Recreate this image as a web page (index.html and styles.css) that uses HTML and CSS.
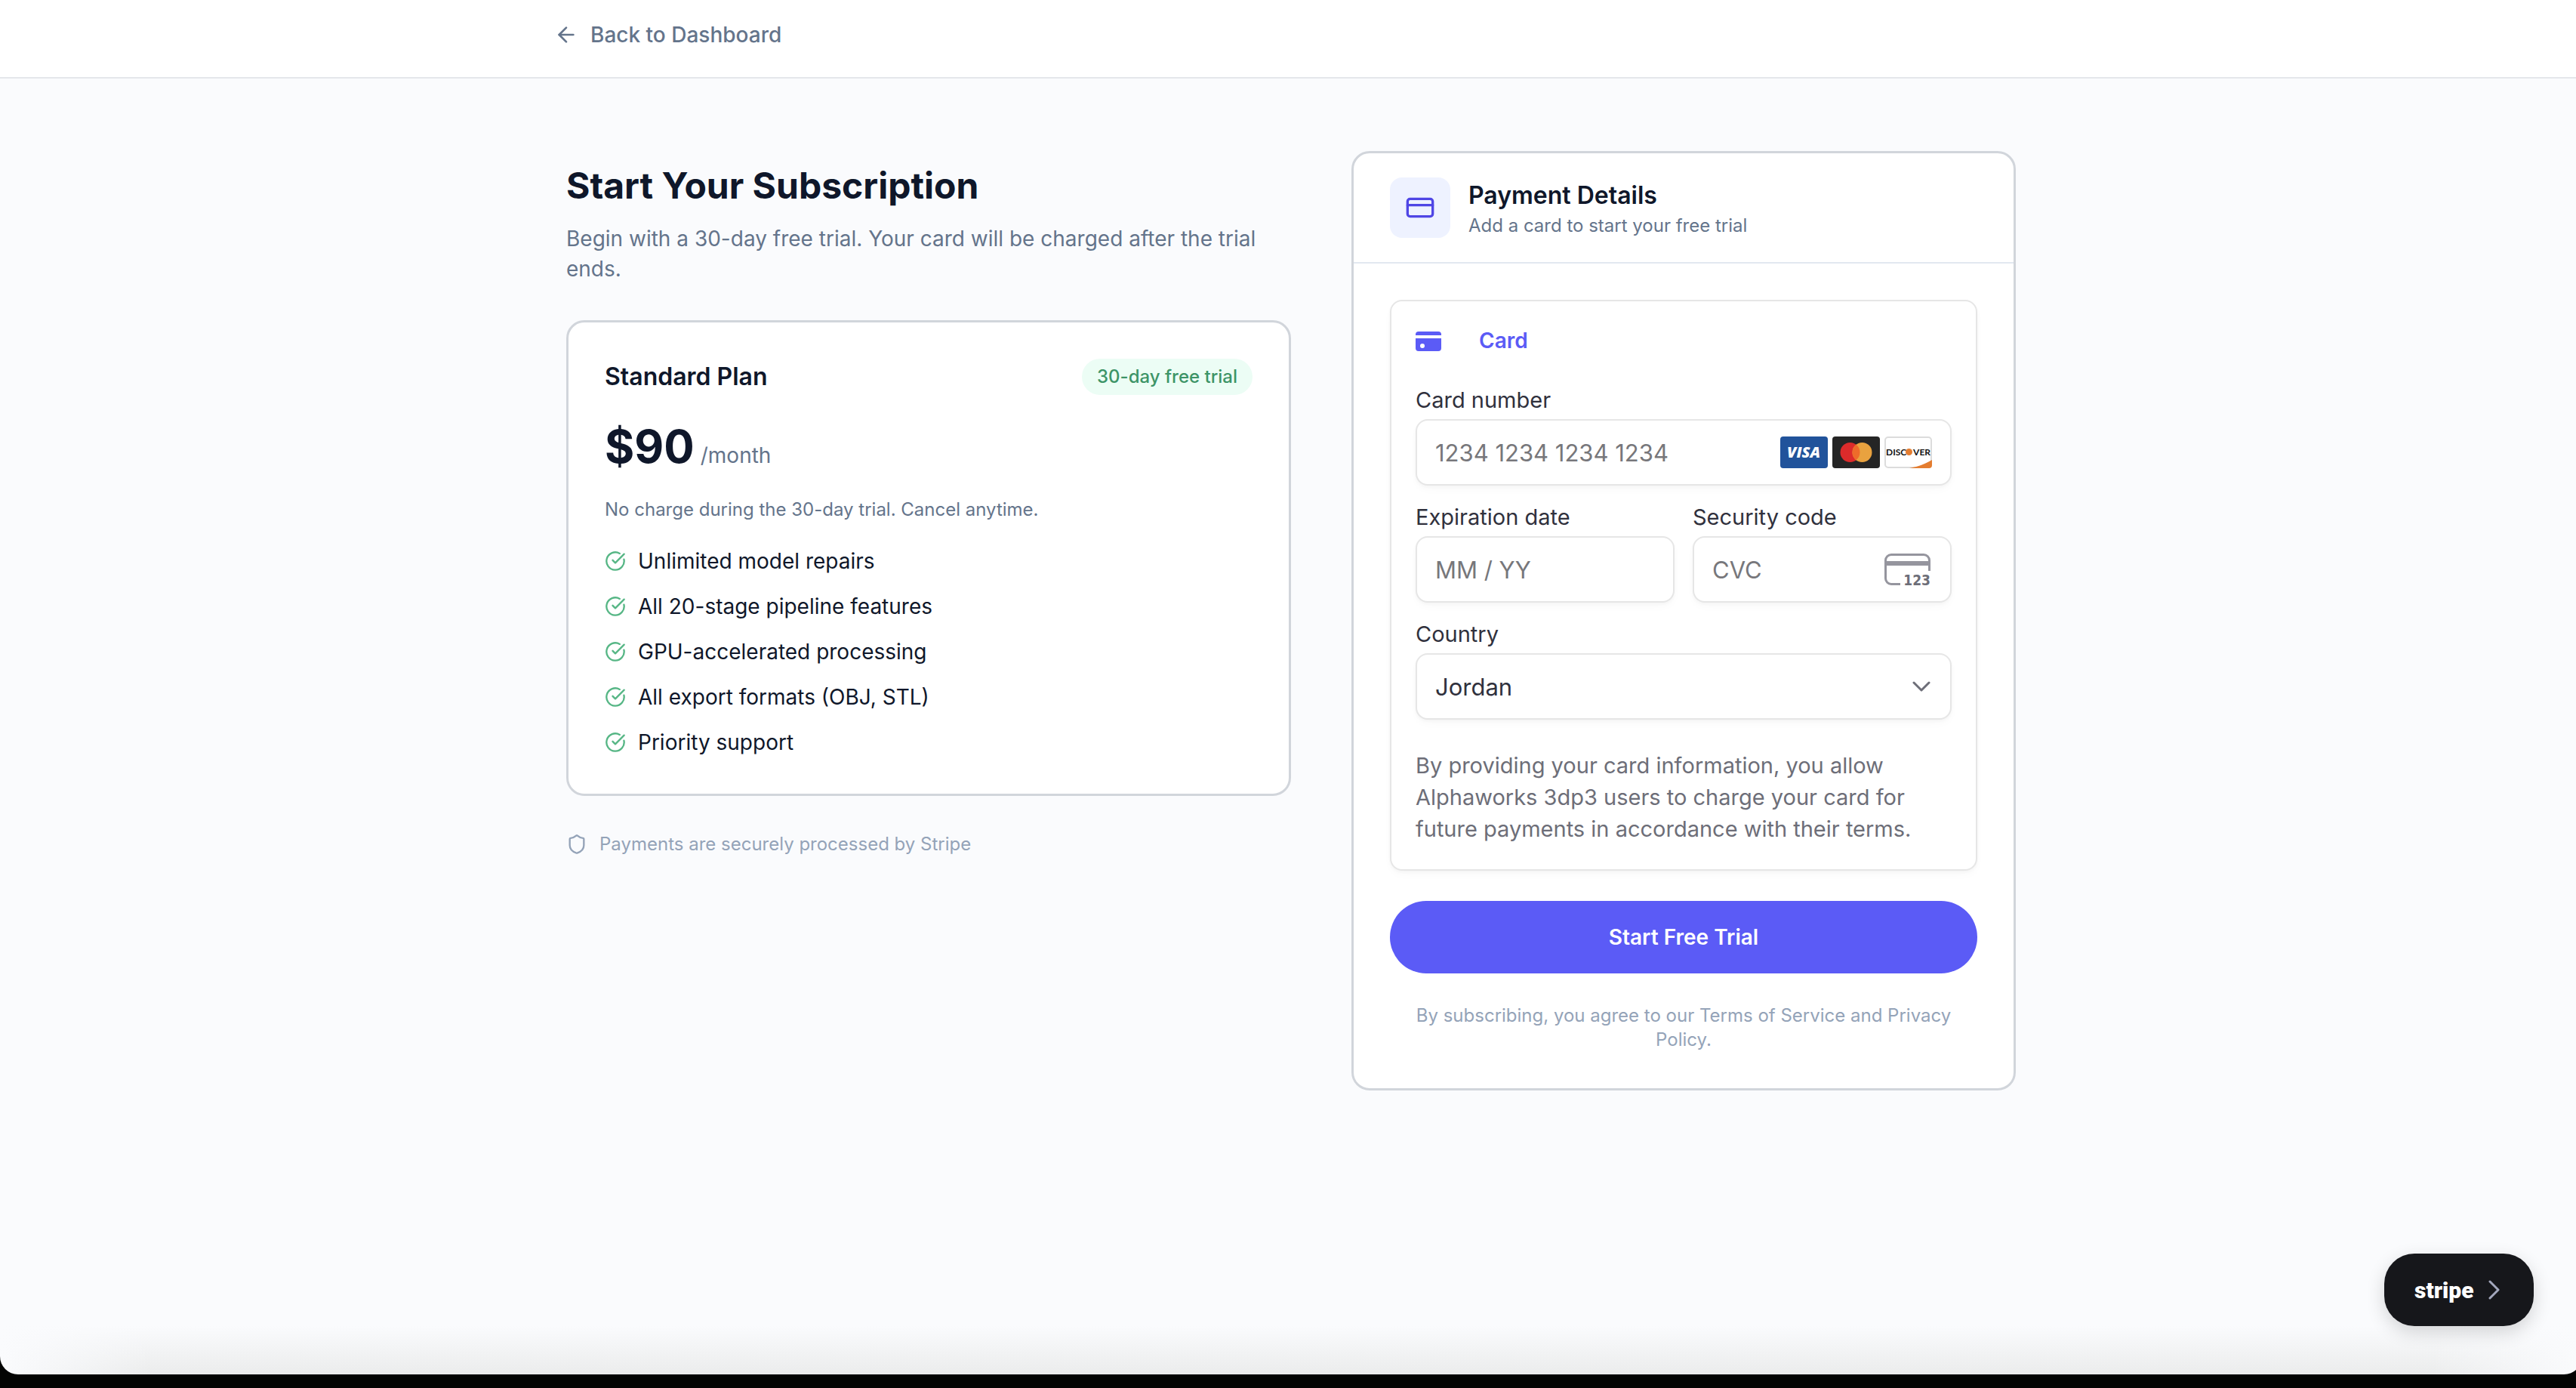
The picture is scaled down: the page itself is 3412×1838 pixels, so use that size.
FILE: index.html
```html
<!DOCTYPE html>
<html lang="en">
<head>
    <meta charset="UTF-8">
    <meta name="viewport" content="width=device-width, initial-scale=1.0">
    <title>Start Your Subscription</title>
    <link rel="stylesheet" href="styles.css">
</head>
<body>
    <!-- Shared icon for the feature list -->
    <svg class="sprite" aria-hidden="true">
        <symbol id="icon-check" viewBox="0 0 24 24">
            <path d="M21.801 10A10 10 0 1 1 17 3.335"/>
            <path d="m9 11 3 3L22 4"/>
        </symbol>
    </svg>

    <div class="window">
        <header class="topbar">
            <div class="topbar-inner">
                <a class="back" href="#">
                    <svg class="icon icon-lg" viewBox="0 0 24 24"><path d="m12 19-7-7 7-7"/><path d="M19 12H5"/></svg>
                    Back to Dashboard
                </a>
            </div>
        </header>

        <main class="layout">
            <!-- Plan summary -->
            <section class="summary">
                <h1>Start Your Subscription</h1>
                <p class="lead">Begin with a 30-day free trial. Your card will be charged after the trial ends.</p>

                <div class="card plan">
                    <div class="plan-head">
                        <h2>Standard Plan</h2>
                        <span class="badge">30-day free trial</span>
                    </div>
                    <div class="price">
                        <strong>$90</strong>
                        <span>/month</span>
                    </div>
                    <p class="note">No charge during the 30-day trial. Cancel anytime.</p>
                    <ul class="features">
                        <li><svg class="icon"><use href="#icon-check"/></svg>Unlimited model repairs</li>
                        <li><svg class="icon"><use href="#icon-check"/></svg>All 20-stage pipeline features</li>
                        <li><svg class="icon"><use href="#icon-check"/></svg>GPU-accelerated processing</li>
                        <li><svg class="icon"><use href="#icon-check"/></svg>All export formats (OBJ, STL)</li>
                        <li><svg class="icon"><use href="#icon-check"/></svg>Priority support</li>
                    </ul>
                </div>

                <p class="secure">
                    <svg class="icon" viewBox="0 0 24 24"><path d="M20 13c0 5-3.5 7.5-7.66 8.95a1 1 0 0 1-.67-.01C7.5 20.5 4 18 4 13V6a1 1 0 0 1 1-1c2 0 4.5-1.2 6.24-2.72a1.17 1.17 0 0 1 1.52 0C14.51 3.81 17 5 19 5a1 1 0 0 1 1 1z"/></svg>
                    Payments are securely processed by Stripe
                </p>
            </section>

            <!-- Payment form -->
            <section class="card payment">
                <div class="payment-head">
                    <div class="tile">
                        <svg class="icon icon-xl" viewBox="0 0 24 24"><rect x="2" y="5" width="20" height="14" rx="2"/><path d="M2 10h20"/></svg>
                    </div>
                    <div>
                        <h2>Payment Details</h2>
                        <p>Add a card to start your free trial</p>
                    </div>
                </div>

                <form class="payment-body">
                    <div class="element">
                        <div class="method">
                            <svg class="method-icon" viewBox="0 0 34 26">
                                <path d="M4 0h26a4 4 0 0 1 4 4v1H0V4a4 4 0 0 1 4-4z"/>
                                <path fill-rule="evenodd" d="M0 9h34v13a4 4 0 0 1-4 4H4a4 4 0 0 1-4-4zM9 16a3 3 0 1 0 0 6 3 3 0 0 0 0-6z"/>
                            </svg>
                            Card
                        </div>

                        <div class="fields">
                            <div class="field field-wide">
                                <label for="number">Card number</label>
                                <div class="control">
                                    <input type="text" id="number" placeholder="1234 1234 1234 1234">
                                    <div class="brands">
                                        <svg class="brand" viewBox="0 0 63 42">
                                            <rect width="63" height="42" rx="4" fill="#21539b"/>
                                            <text class="visa" x="31" y="28" text-anchor="middle">VISA</text>
                                        </svg>
                                        <svg class="brand" viewBox="0 0 63 42">
                                            <rect width="63" height="42" rx="4" fill="#252525"/>
                                            <circle cx="23.5" cy="21" r="13" fill="#dc2b2b"/>
                                            <circle cx="39.5" cy="21" r="13" fill="#e9a23f"/>
                                            <path d="M31.500 10.750a13 13 0 0 1 0 20.500a13 13 0 0 1 0-20.500z" fill="#ee6b2a"/>
                                        </svg>
                                        <svg class="brand" viewBox="0 0 63 42">
                                            <rect x="1" y="1" width="61" height="40" rx="4" fill="#fff" stroke="#dcdcdc" stroke-width="2"/>
                                            <path d="M33 42c12-2 21-6 30-11v7a4 4 0 0 1-4 4z" fill="#e47d30"/>
                                            <text class="discover" x="2" y="25">DISC</text>
                                            <circle cx="32.500" cy="20.500" r="4.500" fill="#e47d30"/>
                                            <text class="discover" x="61" y="25" text-anchor="end">VER</text>
                                        </svg>
                                    </div>
                                </div>
                            </div>

                            <div class="field">
                                <label for="expiry">Expiration date</label>
                                <div class="control">
                                    <input type="text" id="expiry" placeholder="MM / YY">
                                </div>
                            </div>

                            <div class="field">
                                <label for="cvc">Security code</label>
                                <div class="control">
                                    <input type="text" id="cvc" placeholder="CVC">
                                    <svg class="brand" viewBox="0 0 63 42">
                                        <path d="M21 40.500H9a7.500 7.500 0 0 1-7.500-7.500V9A7.500 7.500 0 0 1 9 1.500h43A7.500 7.500 0 0 1 59.500 9v14" fill="none" stroke="#95959e" stroke-width="3"/>
                                        <path d="M1 10h59v6H1z" fill="#95959e"/>
                                        <text class="digits" x="61" y="42" text-anchor="end">123</text>
                                    </svg>
                                </div>
                            </div>

                            <div class="field field-wide">
                                <label for="country">Country</label>
                                <div class="control">
                                    <select id="country">
                                        <option>Jordan</option>
                                    </select>
                                    <svg class="chevron" viewBox="0 0 28 28"><path d="m4 9 10 10L24 9"/></svg>
                                </div>
                            </div>
                        </div>

                        <p class="terms">By providing your card information, you allow Alphaworks 3dp3 users to charge your card for future payments in accordance with their terms.</p>
                    </div>

                    <button class="submit" type="button">Start Free Trial</button>
                    <p class="legal">By subscribing, you agree to our Terms of Service and Privacy Policy.</p>
                </form>
            </section>
        </main>

        <button class="stripe" type="button">
            <span>stripe</span>
            <svg viewBox="0 0 16 26"><path d="m2 2 11 11L2 24"/></svg>
        </button>
    </div>
</body>
</html>
```
FILE: styles.css
```css
* {
    box-sizing: border-box;
}
body {
    margin: 0;
    background-color: #030403;
    color: #0f172a;
    font-family: Inter, "Liberation Sans", sans-serif;
    font-size: 28px;
    line-height: 40px;
    overflow: hidden;
}
h1, h2, p, ul {
    margin: 0;
    padding: 0;
}
.sprite {
    display: none;
}

/* Browser window edge: slightly wider than the viewport */
.window {
    position: relative;
    min-height: calc(100vh - 18px);
    margin-right: -8px;
    border-radius: 0 0 24px 24px;
    overflow: hidden;
    background:
        linear-gradient(to right, #fafbfd, rgba(250, 251, 253, 0) 200px),
        linear-gradient(to left, #fafbfd, rgba(250, 251, 253, 0) 200px),
        linear-gradient(to top, #ebecec, #fafbfd 64px);
}

.icon {
    width: 28px;
    height: 28px;
    flex-shrink: 0;
    fill: none;
    stroke: currentColor;
    stroke-width: 2;
    stroke-linecap: round;
    stroke-linejoin: round;
}
.icon-lg {
    width: 32px;
    height: 32px;
}
.icon-xl {
    width: 40px;
    height: 40px;
}

/* Top bar */
.topbar {
    background-color: #fff;
    border-bottom: 2px solid #e5e7eb;
}
.topbar-inner {
    max-width: 1952px;
    margin: 0 auto;
    padding: 26px 0 36px;
}
.back {
    display: inline-flex;
    align-items: center;
    gap: 16px;
    color: #64748b;
    font-weight: 500;
    text-decoration: none;
    vertical-align: top;
}

.layout {
    display: grid;
    grid-template-columns: 1fr 880px;
    align-items: start;
    gap: 80px;
    max-width: 1920px;
    margin: 0 auto;
    padding: 96px 0;
}
.card {
    background-color: #fff;
    border: 3px solid #d1d5db;
    border-radius: 24px;
}
h2 {
    font-size: 32px;
    font-weight: 600;
    line-height: 48px;
}

/* Summary column */
.summary {
    padding-top: 16px;
}
h1 {
    font-size: 48px;
    font-weight: 700;
    line-height: 60px;
}
.lead {
    margin-top: 20px;
    color: #64748b;
}
.plan {
    margin-top: 48px;
    padding: 48px;
}
.plan-head {
    display: flex;
    align-items: center;
    justify-content: space-between;
}
.badge {
    padding: 0 20px;
    border-radius: 24px;
    background-color: #ecfdf5;
    color: #3d9467;
    font-size: 24px;
    font-weight: 500;
    line-height: 48px;
}
.price {
    display: flex;
    align-items: baseline;
    gap: 8px;
    margin-top: 26px;
    color: #64748b;
}
.price strong {
    color: #0f172a;
    font-size: 60px;
    font-weight: 700;
    line-height: 84px;
}
.note {
    margin-top: 24px;
    color: #64748b;
    font-size: 24px;
    line-height: 36px;
}
.features {
    display: flex;
    flex-direction: column;
    gap: 20px;
    margin-top: 30px;
    list-style: none;
}
.features li {
    display: flex;
    align-items: center;
    gap: 16px;
}
.features .icon {
    color: #56b685;
}
.secure {
    display: flex;
    align-items: center;
    gap: 16px;
    margin-top: 48px;
    color: #94a3b8;
    font-size: 24px;
    line-height: 32px;
}

/* Payment column */
.payment-head {
    display: flex;
    align-items: center;
    gap: 24px;
    padding: 32px 48px;
    border-bottom: 2px solid #e2e8f0;
}
.payment-head p {
    color: #64748b;
    font-size: 24px;
    line-height: 32px;
}
.tile {
    display: flex;
    align-items: center;
    justify-content: center;
    width: 80px;
    height: 80px;
    border-radius: 16px;
    background-color: #eef2ff;
    color: #4f46e5;
}
.payment-body {
    padding: 48px;
}
.element {
    padding: 32px;
    border: 2px solid #e6e6e6;
    border-radius: 16px;
    box-shadow: 0 2px 4px rgba(0, 0, 0, 0.03), 0 6px 12px rgba(0, 0, 0, 0.02);
}
.method {
    display: flex;
    align-items: center;
    gap: 50px;
    margin-bottom: 40px;
    color: #5b5bf6;
    font-weight: 600;
    line-height: 41px;
}
.method-icon {
    width: 34px;
    height: 26px;
    fill: #5b5bf6;
}
.fields {
    display: grid;
    grid-template-columns: repeat(2, minmax(0, 1fr));
    gap: 24px;
}
.field-wide {
    grid-column: 1 / -1;
}
.field label {
    display: block;
    margin-bottom: 8px;
    color: #30313d;
    font-size: 29px;
    line-height: 35px;
}
.control {
    display: flex;
    align-items: center;
    height: 88px;
    padding: 0 24px;
    border: 2px solid #e6e6e6;
    border-radius: 16px;
    background-color: #fff;
    box-shadow: 0 2px 4px rgba(0, 0, 0, 0.03), 0 6px 12px rgba(0, 0, 0, 0.02);
}
.control input, .control select {
    flex: 1;
    min-width: 0;
    padding: 0;
    border: none;
    outline: none;
    background: none;
    appearance: none;
    color: #30313d;
    font-family: inherit;
    font-size: 31px;
}
.control input::placeholder {
    color: #77777b;
}
.brands {
    display: flex;
    gap: 6px;
}
.brand {
    width: 63px;
    height: 42px;
    flex-shrink: 0;
    overflow: visible;
}
.visa {
    fill: #fff;
    font-family: "Open Sans", sans-serif;
    font-size: 20px;
    font-style: italic;
    font-weight: 800;
}
.discover {
    fill: #111;
    font-family: Lato, sans-serif;
    font-size: 12px;
    font-weight: 700;
}
.digits {
    fill: #6d6e78;
    font-family: "DejaVu Sans Condensed", "DejaVu Sans", sans-serif;
    font-size: 19px;
    font-weight: 700;
}
.chevron {
    width: 28px;
    height: 28px;
    fill: none;
    stroke: #6d6e78;
    stroke-width: 3;
    stroke-linecap: round;
    stroke-linejoin: round;
}
.terms {
    margin-top: 40px;
    color: #6d6e78;
    font-size: 29px;
    line-height: 42px;
}
.submit {
    display: block;
    width: 100%;
    height: 96px;
    margin-top: 40px;
    border: none;
    border-radius: 48px;
    background-color: #5b5bf6;
    color: #fff;
    font-family: inherit;
    font-size: 28px;
    font-weight: 600;
    cursor: pointer;
}
.legal {
    margin-top: 40px;
    color: #94a3b8;
    font-size: 24px;
    line-height: 32px;
    text-align: center;
}

/* Floating Stripe button */
.stripe {
    position: absolute;
    right: 64px;
    bottom: 64px;
    display: flex;
    align-items: center;
    justify-content: space-between;
    width: 198px;
    height: 96px;
    padding: 0 44px 0 40px;
    border: none;
    border-radius: 40px;
    background-color: #16171b;
    color: #fff;
    box-shadow: 0 8px 24px rgba(0, 0, 0, 0.16);
    font-family: Roboto, sans-serif;
    font-size: 30px;
    font-weight: 900;
    cursor: pointer;
}
.stripe svg {
    width: 16px;
    height: 26px;
    flex-shrink: 0;
    fill: none;
    stroke: #a3a8bd;
    stroke-width: 3;
    stroke-linecap: round;
    stroke-linejoin: round;
}
```
